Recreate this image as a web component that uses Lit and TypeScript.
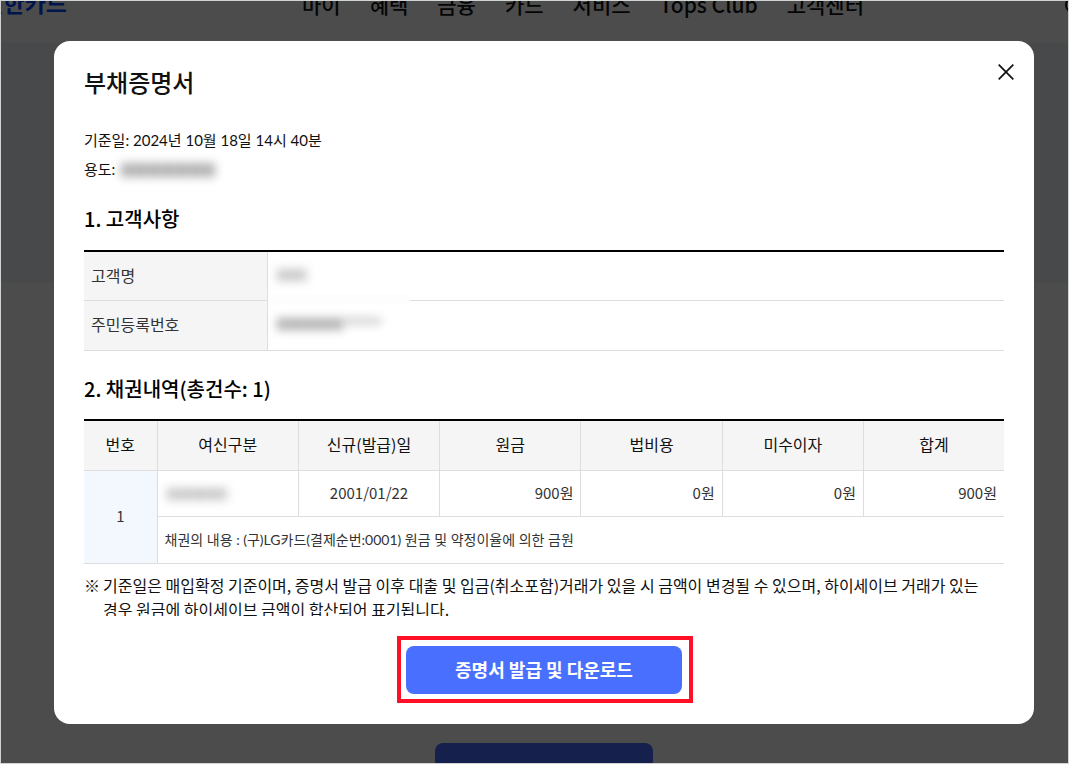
import { LitElement, html, css } from "lit";
import { customElement } from "lit/decorators.js";

const MENU = ["마이", "혜택", "금융", "카드", "서비스", "Tops Club", "고객센터"];

interface Debt {
  no: number;
  issued: string;
  amounts: string[];
  detail: string;
}

const COLUMNS = ["번호", "여신구분", "신규(발급)일", "원금", "법비용", "미수이자", "합계"];

const DEBTS: Debt[] = [
  {
    no: 1,
    issued: "2001/01/22",
    amounts: ["900원", "0원", "0원", "900원"],
    detail: "채권의 내용 : (구)LG카드(결제순번:0001) 원금 및 약정이율에 의한 금원",
  },
];

@customElement("site-page")
class SitePage extends LitElement {
  static styles = css`
    :host {
      display: flex;
      flex-direction: column;
      height: 100%;
      overflow: hidden;
      background: #fff;
    }
    .header {
      display: flex;
      align-items: center;
      flex: none;
      height: 74px;
      margin-top: -32px;
    }
    .logo {
      flex: none;
      width: 66px;
      display: flex;
      justify-content: flex-end;
      padding-bottom: 8px;
      color: #0046ff;
      font-size: 23px;
      font-weight: 700;
      text-decoration: none;
      white-space: nowrap;
    }
    .menu {
      display: flex;
      flex: 1;
      gap: 29px;
      margin-left: 235px;
      padding-bottom: 4px;
    }
    .menu a {
      color: #111;
      font-size: 21px;
      font-weight: 500;
      text-decoration: none;
      white-space: nowrap;
    }
    .search {
      flex: none;
      margin-right: -17px;
      padding: 0;
      border: 0;
      background: none;
    }
    .search svg {
      display: block;
    }
    .hero {
      flex: none;
      height: 240px;
      background: #f0f5fc;
    }
    .content {
      display: flex;
      flex: 1;
      align-items: flex-end;
      justify-content: center;
      padding-left: 18px;
    }
    .submit {
      width: 218px;
      height: 48px;
      margin-bottom: -28px;
      border: 0;
      border-radius: 8px;
      background: #496ffe;
    }
  `;

  render() {
    return html`
      <header class="header">
        <a class="logo" href="#">신한카드</a>
        <nav class="menu">${MENU.map((m) => html`<a href="#">${m}</a>`)}</nav>
        <button class="search" aria-label="검색">
          <svg width="20" height="20" viewBox="0 0 20 20" fill="none" stroke="#111" stroke-width="2">
            <circle cx="9" cy="9" r="8" />
            <path d="M15 15l4 4" />
          </svg>
        </button>
      </header>
      <div class="hero"></div>
      <div class="content"><button class="submit" aria-label="발급"></button></div>
    `;
  }
}

@customElement("debt-certificate")
class DebtCertificate extends LitElement {
  static styles = css`
    :host {
      display: flex;
      flex-direction: column;
      flex: 1;
      min-width: 0;
      border-radius: 16px;
      background: #fff;
      color: #111;
    }
    .head {
      display: flex;
      align-items: flex-start;
      justify-content: space-between;
      padding: 22px 20px 0 30px;
    }
    .title {
      margin: 0;
      font-size: 24px;
      font-weight: 500;
      line-height: 38px;
    }
    .close {
      padding: 0;
      border: 0;
      background: none;
    }
    .close svg {
      display: block;
    }
    .body {
      flex: 1;
      min-height: 0;
      overflow: hidden;
      padding: 25px 30px 0;
    }
    .meta {
      height: 29px;
      margin: 0;
      font-family: Lato, "Noto Sans CJK KR", sans-serif;
      font-size: 15px;
      line-height: 29px;
    }
    .section {
      margin: 20px 0 16px;
      color: #000;
      font-size: 20px;
      font-weight: 500;
      line-height: 30px;
    }
    .section.next {
      margin: 23px 0 15px;
    }
    table {
      width: 100%;
      border-collapse: separate;
      border-spacing: 0;
      border-top: 2px solid #000;
      table-layout: fixed;
    }
    th,
    td {
      box-sizing: border-box;
      padding: 0 7px 3px;
      border-right: 1px solid #ddd;
      border-bottom: 1px solid #ddd;
      font-weight: 400;
    }
    .person th {
      width: 20%;
      height: 49px;
      background: #f5f5f5;
      color: #333;
      font-size: 16px;
      text-align: left;
    }
    .person tr:last-child > * {
      height: 50px;
    }
    .person td {
      position: relative;
      padding-bottom: 8px;
      border-right: 0;
    }
    .debts th {
      height: 50px;
      background: #f5f5f5;
      font-size: 16px;
    }
    .debts th:first-child {
      width: 8%;
    }
    .debts th.last {
      width: 140px;
    }
    .debts .last {
      border-right: 0;
    }
    .debts td {
      height: 46px;
      padding-bottom: 2px;
      color: #333;
      font-size: 15px;
    }
    .debts td.no {
      padding-bottom: 3px;
      background: #f3f7fe;
      text-align: center;
    }
    .debts td.date {
      text-align: center;
    }
    .debts td.money {
      text-align: right;
    }
    .debts td.detail {
      height: 47px;
      padding-bottom: 3px;
      font-family: Lato, "Noto Sans CJK KR", sans-serif;
      font-size: 14px;
    }
    .note {
      display: flex;
      gap: 3px;
      margin: 9px 0 0;
      font-size: 16px;
      line-height: 24px;
      word-break: keep-all;
    }
    .mask {
      display: inline-block;
      vertical-align: middle;
      height: 14px;
      background: repeating-linear-gradient(90deg, #b0b0b0 0 10px, #bebebe 10px 14px);
      filter: blur(5px);
    }
    .purpose {
      width: 94px;
      margin: 0 0 3px 6px;
    }
    .name {
      width: 30px;
      height: 12px;
      margin-left: 2px;
      opacity: 0.7;
    }
    .ident {
      width: 66px;
      height: 12px;
      margin-left: 2px;
    }
    .tail {
      width: 38px;
      height: 6px;
      margin-bottom: 6px;
      opacity: 0.7;
    }
    .kind {
      width: 60px;
      height: 12px;
      margin: 0 0 1px 2px;
      opacity: 0.7;
    }
    .smudge {
      position: absolute;
      left: 0;
      bottom: -4px;
      width: 142px;
      height: 10px;
      background: #fdfdfd;
    }
    .foot {
      display: flex;
      justify-content: center;
      padding: 30px;
    }
    .download {
      position: relative;
      width: 276px;
      height: 48px;
      padding: 0 0 2px;
      border: 0;
      border-radius: 8px;
      background: #496ffe;
      color: #fff;
      font: inherit;
      font-size: 18px;
      font-weight: 700;
    }
    .download::after {
      content: "";
      position: absolute;
      inset: -10px -11px -9px -9px;
      border: 4px solid #ff1026;
    }
  `;

  private debtRows(d: Debt) {
    return html`
      <tr>
        <td class="no" rowspan="2">${d.no}</td>
        <td><span class="mask kind"></span></td>
        <td class="date">${d.issued}</td>
        ${d.amounts.map(
          (a, i) => html`<td class="money ${i === d.amounts.length - 1 ? "last" : ""}">${a}</td>`
        )}
      </tr>
      <tr>
        <td class="detail last" colspan="6">${d.detail}</td>
      </tr>
    `;
  }

  render() {
    return html`
      <header class="head">
        <h1 class="title" id="title">부채증명서</h1>
        <button class="close" aria-label="닫기">
          <svg width="16" height="18" viewBox="0 0 16 18" fill="none" stroke="#111" stroke-width="1.7">
            <path d="M.7 1.7l14.6 14.6M15.3 1.7L.7 16.3" />
          </svg>
        </button>
      </header>
      <div class="body">
        <p class="meta">기준일: 2024년 10월 18일 14시 40분</p>
        <p class="meta">용도:<span class="mask purpose"></span></p>

        <h2 class="section">1. 고객사항</h2>
        <table class="person">
          <tr>
            <th scope="row">고객명</th>
            <td><span class="mask name"></span><span class="smudge"></span></td>
          </tr>
          <tr>
            <th scope="row">주민등록번호</th>
            <td><span class="mask ident"></span><span class="mask tail"></span></td>
          </tr>
        </table>

        <h2 class="section next">2. 채권내역(총건수: 1)</h2>
        <table class="debts">
          <thead>
            <tr>
              ${COLUMNS.map(
                (c, i) => html`<th scope="col" class=${i === COLUMNS.length - 1 ? "last" : ""}>${c}</th>`
              )}
            </tr>
          </thead>
          <tbody>
            ${DEBTS.map((d) => this.debtRows(d))}
          </tbody>
        </table>
        <p class="note">
          <span>※</span>
          <span>기준일은 매입확정 기준이며, 증명서 발급 이후 대출 및 입금(취소포함)거래가 있을 시 금액이 변경될 수 있으며, 하이세이브 거래가 있는 경우 원금에 하이세이브 금액이 합산되어 표기됩니다.</span>
        </p>
      </div>
      <footer class="foot">
        <button class="download">증명서 발급 및 다운로드</button>
      </footer>
    `;
  }
}

@customElement("app-root")
class AppRoot extends LitElement {
  static styles = css`
    :host {
      display: block;
      position: relative;
      box-sizing: border-box;
      height: 100vh;
      border: 1px solid #d0d4d2;
      font-family: "Noto Sans CJK KR", sans-serif;
    }
    .overlay {
      position: absolute;
      inset: 0;
      display: flex;
      padding: 40px 34px 39px 53px;
      background: rgba(0, 0, 0, 0.7);
    }
  `;

  render() {
    return html`
      <site-page></site-page>
      <div class="overlay">
        <debt-certificate role="dialog" aria-modal="true"></debt-certificate>
      </div>
    `;
  }
}
